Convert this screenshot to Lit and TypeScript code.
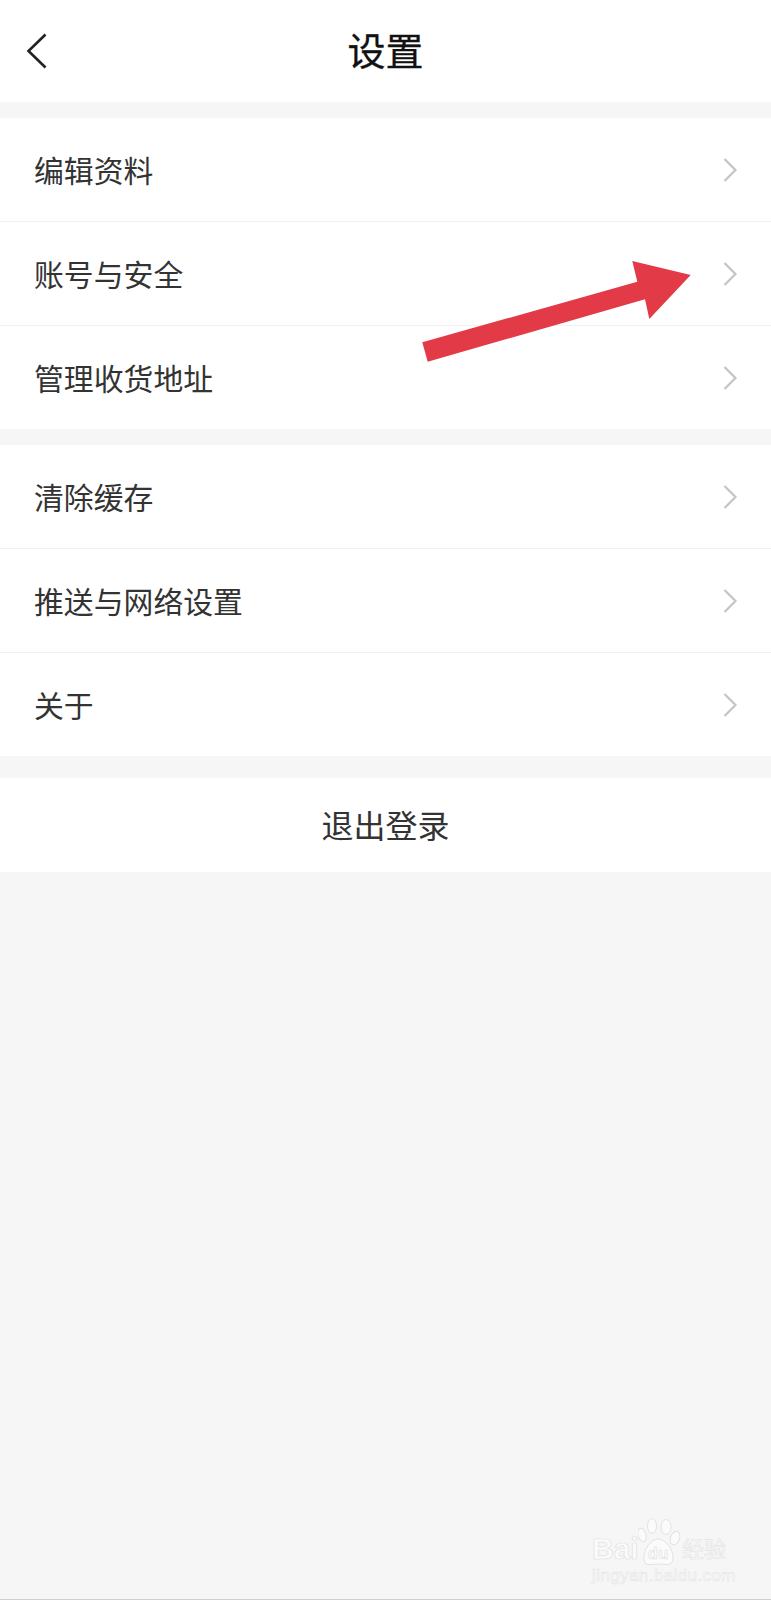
import { LitElement, html, css } from "lit";
import { customElement } from "lit/decorators.js";

const chevron = html`<svg class="chev" viewBox="0 0 15 24" width="15" height="24"><path d="M1.5 1 L12.5 12 L1.5 23" fill="none" stroke="#c4c4c4" stroke-width="2.2"/></svg>`;

@customElement("app-root")
export class AppRoot extends LitElement {
  static styles = css`
    :host { display: block; width: 771px; height: 1600px; position: relative; overflow: hidden; background: #f6f6f6;
      font-family: "Noto Sans CJK SC", "Liberation Sans", sans-serif; color: #333; }
    .header { height: 102px; background: #fff; display: flex; align-items: center; justify-content: center; position: relative; }
    .title { font-size: 38px; color: #111; line-height: 1; font-weight: 400; padding-bottom: 5px; -webkit-text-stroke: 0.3px #111; }
    .back { position: absolute; left: 26px; top: 33px; }
    .group { background: #fff; margin-top: 16px; }
    .row { height: 104px; box-sizing: border-box; padding: 0 33px 0 34px; display: flex; align-items: center; justify-content: space-between; border-bottom: 1px solid #f1f1f1; font-size: 29.85px; }
    .row:last-child { border-bottom: none; height: 103px; }
    .row span { line-height: 1; }
    .logout { margin-top: 22px; height: 94px; background: #fff; display: flex; align-items: center; justify-content: center; font-size: 32px; }
    .logout span { line-height: 1; padding-bottom: 3px; }
    .arrow { position: absolute; left: 0; top: 0; pointer-events: none; }
    .footline { position: absolute; left: 0; right: 0; bottom: 0; height: 1px; background: #cfcfcf; }
    .wm { position: absolute; left: 590px; top: 1515px; width: 150px; height: 80px; color: #fbfbfb; font-family: "Liberation Sans", sans-serif; }
    .bai { position: absolute; left: 2px; top: 20px; font-size: 30px; font-weight: 700; line-height: 28px; -webkit-text-stroke: 0.7px #e2e2e2; }
    .cn { position: absolute; left: 92px; top: 21px; font-size: 22px; line-height: 1; font-family: "Noto Sans CJK SC", sans-serif; -webkit-text-stroke: 0.6px #e2e2e2; }
    .url { position: absolute; left: 2px; top: 51.5px; font-size: 17px; line-height: 1; letter-spacing: 0.4px; -webkit-text-stroke: 0.5px #e2e2e2; white-space: nowrap; }
    .paw { position: absolute; left: 48px; top: 2px; }
  `;

  private row(t: string) {
    return html`<div class="row"><span>${t}</span>${chevron}</div>`;
  }

  render() {
    return html`
      <div class="header">
        <svg class="back" width="22" height="36" viewBox="0 0 22 36"><path d="M19.5 1.5 L2.5 18 L19.5 34.5" fill="none" stroke="#222" stroke-width="2.6"/></svg>
        <span class="title">设置</span>
      </div>
      <div class="group">
        ${["编辑资料", "账号与安全", "管理收货地址"].map((t) => this.row(t))}
      </div>
      <div class="group">
        ${["清除缓存", "推送与网络设置", "关于"].map((t) => this.row(t))}
      </div>
      <div class="logout"><span>退出登录</span></div>
      <svg class="arrow" width="771" height="400" viewBox="0 0 771 400">
        <polygon points="422.3,342.3 427.7,361.7 645,299.3 649.3,319 690.7,275 632.3,261 637.3,281.7" fill="#e23a47"/>
      </svg>
      <div class="wm">
        <span class="bai">Bai</span>
        <svg class="paw" width="44" height="54" viewBox="0 0 44 54">
          <g fill="#fbfbfb" stroke="#e2e2e2" stroke-width="1">
            <ellipse cx="4" cy="18" rx="4" ry="7" transform="rotate(-15 4 18)"/>
            <ellipse cx="14" cy="9" rx="4.5" ry="7.5"/>
            <ellipse cx="28" cy="10" rx="5" ry="7.5"/>
            <ellipse cx="37" cy="21" rx="4.5" ry="7" transform="rotate(20 37 21)"/>
            <path d="M20 22 C28 22 36 33 35 42 C34 50 26 47 20 47 C14 47 6 50 6 42 C5 33 13 22 20 22 Z"/>
          </g>
          <text x="20" y="42" text-anchor="middle" font-size="17" font-weight="700" font-family="Liberation Sans" fill="#fbfbfb" stroke="#e0e0e0" stroke-width="0.6">du</text>
        </svg>
        <span class="cn">经验</span>
        <span class="url">jingyan.baidu.com</span>
      </div>
      <div class="footline"></div>
    `;
  }
}
